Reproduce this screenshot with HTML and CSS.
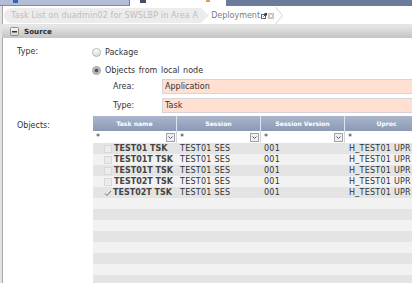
FILE: index.html
```html
<!DOCTYPE html>
<html>
<head>
<meta charset="utf-8">
<title>Deployment</title>
<link rel="stylesheet" href="styles.css">
</head>
<body>
<div class="tabs">
  <div class="tab-off"><span class="tab-icon-blue"></span></div>
  <div class="tab-on"><span class="tab-icon-dark"></span><span class="tab-icon-orange"></span></div>
  <div class="tab-fill"></div>
</div>
<div class="frame">
  <div class="crumbs">
    <div class="crumb-prev">Task List on duadmin02 for SWSLBP in Area A</div>
    <div class="crumb-cur">
      <span class="crumb-text">Deployment</span>
      <svg class="ico" width="6" height="6" viewBox="0 0 6 6"><rect x="0.5" y="1.5" width="4" height="4" fill="#fff" stroke="#666"/><path d="M2.5 3.5 L5.5 0.5 M3.5 0.5 H5.5 V2.5" stroke="#333" fill="none"/></svg>
      <svg class="ico" width="6" height="6" viewBox="0 0 6 6"><rect x="0" y="0" width="6" height="6" fill="#c4c4c4"/><path d="M1.5 1.5 L4.5 4.5 M4.5 1.5 L1.5 4.5" stroke="#fff"/></svg>
      <svg class="chev" width="8" height="17" viewBox="0 0 8 17"><polyline points="0.5,0 7.5,8.5 0.5,17" fill="none" stroke="#d2d2d2"/></svg>
    </div>
  </div>
  <div class="section-head">
    <svg class="toggle" width="9" height="9" viewBox="0 0 9 9"><defs><linearGradient id="tg" x1="0" y1="0" x2="0" y2="1"><stop offset="0" stop-color="#fafafa"/><stop offset="1" stop-color="#d4d4d4"/></linearGradient></defs><rect x="0.5" y="0.5" width="8" height="8" rx="1" fill="url(#tg)" stroke="#8c8c8c"/><rect x="2" y="4" width="5" height="1.5" fill="#333"/></svg>
    <span>Source</span>
  </div>
  <div class="form">
    <div class="lbl">Type:</div>
    <div class="radio-row">
      <svg width="9" height="9" viewBox="0 0 9 9"><defs><linearGradient id="rg" x1="0" y1="0" x2="0" y2="1"><stop offset="0" stop-color="#ffffff"/><stop offset="1" stop-color="#dcdcdc"/></linearGradient></defs><circle cx="4.5" cy="4.5" r="4" fill="url(#rg)" stroke="#b4b4b4"/></svg>
      <span>Package</span>
    </div>
    <div class="lbl"></div>
    <div class="radio-row">
      <svg width="9" height="9" viewBox="0 0 9 9"><circle cx="4.5" cy="4.5" r="4" fill="#c2c2c2" stroke="#a4a4a4"/><circle cx="4.5" cy="4.5" r="2" fill="#585858"/></svg>
      <span>Objects from local node</span>
    </div>
    <div class="lbl"></div>
    <div class="sub sub-area">
      <span class="sub-lbl">Area:</span>
      <div class="field">Application</div>
    </div>
    <div class="lbl"></div>
    <div class="sub sub-type">
      <span class="sub-lbl">Type:</span>
      <div class="field">Task</div>
    </div>
    <div class="lbl lbl-objects">Objects:</div>
    <div class="grid">
      <div class="g-head">
        <div class="h-cell">Task name</div>
        <div class="h-cell">Session</div>
        <div class="h-cell">Session Version</div>
        <div class="h-cell">Uproc</div>
      </div>
      <div class="g-filter">
        <div class="f-cell"><span>*</span><svg class="dd" width="9" height="9" viewBox="0 0 9 9"><rect x="0.5" y="0.5" width="8" height="8" fill="#eef0f4" stroke="#9ba2b0"/><polyline points="2.5,3.5 4.5,5.5 6.5,3.5" fill="none" stroke="#555"/></svg></div>
        <div class="f-cell"><span>*</span><svg class="dd" width="9" height="9" viewBox="0 0 9 9"><rect x="0.5" y="0.5" width="8" height="8" fill="#eef0f4" stroke="#9ba2b0"/><polyline points="2.5,3.5 4.5,5.5 6.5,3.5" fill="none" stroke="#555"/></svg></div>
        <div class="f-cell"><span>*</span><svg class="dd" width="9" height="9" viewBox="0 0 9 9"><rect x="0.5" y="0.5" width="8" height="8" fill="#eef0f4" stroke="#9ba2b0"/><polyline points="2.5,3.5 4.5,5.5 6.5,3.5" fill="none" stroke="#555"/></svg></div>
        <div class="f-cell"><span>*</span></div>
      </div>
      <div class="g-row">
        <div class="c-task"><span class="cb"></span><span class="tname">TEST01 TSK</span></div>
        <div class="c">TEST01 SES</div><div class="c">001</div><div class="c c4">H_TEST01 UPR</div>
      </div>
      <div class="g-row">
        <div class="c-task"><span class="cb"></span><span class="tname">TEST01T TSK</span></div>
        <div class="c">TEST01 SES</div><div class="c">001</div><div class="c c4">H_TEST01 UPR</div>
      </div>
      <div class="g-row">
        <div class="c-task"><span class="cb"></span><span class="tname">TEST01T TSK</span></div>
        <div class="c">TEST01 SES</div><div class="c">001</div><div class="c c4">H_TEST01 UPR</div>
      </div>
      <div class="g-row">
        <div class="c-task"><span class="cb"></span><span class="tname">TEST02T TSK</span></div>
        <div class="c">TEST01 SES</div><div class="c">001</div><div class="c c4">H_TEST01 UPR</div>
      </div>
      <div class="g-row">
        <div class="c-task"><svg class="cb-check" width="8" height="8" viewBox="0 0 8 8"><polyline points="1,4.5 3,6.5 7,2" fill="none" stroke="#6a6a6a" stroke-width="1"/></svg><span class="tname">TEST02T TSK</span></div>
        <div class="c">TEST01 SES</div><div class="c">001</div><div class="c c4">H_TEST01 UPR</div>
      </div>
      <div class="g-row"></div>
      <div class="g-row"></div>
      <div class="g-row"></div>
      <div class="g-row"></div>
      <div class="g-row"></div>
      <div class="g-row"></div>
      <div class="g-row"></div>
      <div class="g-row"></div>
    </div>
  </div>
</div>
</body>
</html>
```
FILE: styles.css
```css
html, body {
  margin: 0;
  padding: 0;
}
body {
  width: 412px;
  height: 283px;
  overflow: hidden;
  background: #fff;
  font-family: "DejaVu Sans", "Liberation Sans", sans-serif;
  font-size: 8px;
  color: #333;
}

/* top tab strip */
.tabs {
  display: flex;
  height: 6px;
}
.tab-off {
  width: 130px;
  box-sizing: border-box;
  background: #b3bdd6;
  border-right: 1px solid #6f7f9f;
  border-bottom: 1px solid #7d8bab;
  padding-left: 13px;
}
.tab-icon-blue {
  display: block;
  width: 5px;
  height: 3px;
  background: #3564b4;
}
.tab-on {
  width: 96px;
  background: #fff;
  display: flex;
  align-items: flex-start;
  padding-left: 10px;
  box-sizing: border-box;
  justify-content: space-between;
  padding-right: 16px;
}
.tab-icon-dark {
  display: block;
  width: 6px;
  height: 3px;
  background: #40506c;
}
.tab-icon-orange {
  display: block;
  width: 4px;
  height: 2px;
  background: #e0a050;
}
.tab-fill {
  flex: 1;
  background: #6b7b9b;
}

/* frame with left border */
.frame {
  border-left: 2px solid #e2e2e2;
  box-shadow: inset 1px 0 0 #a8a8a8;
  height: 277px;
}

/* breadcrumbs */
.crumbs {
  display: flex;
  align-items: center;
  height: 17px;
  padding-top: 1px;
  border-bottom: 1px solid #e4e4e4;
  padding-left: 2px;
}
.crumb-prev {
  height: 15px;
  line-height: 15px;
  background: #ececec;
  color: #bdbdbd;
  border-radius: 8px 0 0 8px;
  padding: 0 11px 0 7px;
  letter-spacing: 0.12px;
  clip-path: polygon(0 0, calc(100% - 8px) 0, 100% 50%, calc(100% - 8px) 100%, 0 100%);
  white-space: nowrap;
}
.crumb-cur {
  display: flex;
  align-items: center;
  height: 17px;
  margin-left: 2px;
  color: #7a7a7a;
}
.crumb-text {
  margin-right: 1px;
}
.ico {
  margin-right: 1px;
}
.chev {
  margin-left: 0;
}

/* section header */
.section-head {
  display: flex;
  align-items: center;
  height: 13px;
  background: linear-gradient(#e8e8e8, #c4c4c4);
  padding-left: 8px;
  font-weight: bold;
  font-size: 7.2px;
  color: #2e2e2e;
}
.toggle {
  margin-right: 5px;
}

/* form */
.form {
  display: grid;
  grid-template-columns: 75px 1fr;
  padding: 5px 0 0 15px;
  word-spacing: 1px;
}
.lbl {
  height: 18px;
  line-height: 18px;
  color: #333;
}
.radio-row {
  display: flex;
  align-items: center;
  height: 18px;
  gap: 4px;
}
.sub {
  display: grid;
  grid-template-columns: 49px 1fr;
  align-items: center;
  padding-left: 21px;
  margin-right: -10px;
}
.sub-area {
  margin-bottom: 4px;
}
.sub-type {
  margin-bottom: 3px;
}
.sub-lbl {
  color: #333;
}
.field {
  height: 15px;
  line-height: 13px;
  box-sizing: border-box;
  background: #ffe0d1;
  border: 1px solid #d6d2de;
  padding-left: 2px;
  color: #333;
}
.lbl-objects {
  height: auto;
  line-height: 10px;
  padding-top: 5px;
}

/* data grid */
.grid {
  margin-left: 1px;
  width: 340px;
  word-spacing: 0;
}
.g-head {
  display: grid;
  grid-template-columns: repeat(4, 83px);
  column-gap: 1px;
  background: #dfe4ee;
  height: 15px;
}
.h-cell {
  background: linear-gradient(#abb6cc, #8b99b5);
  color: #fff;
  font-weight: bold;
  font-size: 6.1px;
  text-align: center;
  line-height: 15px;
  white-space: nowrap;
}
.g-filter {
  display: grid;
  grid-template-columns: repeat(4, 83px);
  column-gap: 1px;
  background: #d4d4d4;
  height: 12px;
}
.f-cell {
  background: #fff;
  display: flex;
  align-items: center;
  justify-content: space-between;
  padding: 0 1px 0 3px;
  color: #333;
}
.dd {
  display: block;
}
.g-row {
  display: grid;
  grid-template-columns: repeat(4, 83px);
  column-gap: 1px;
  height: 11px;
  line-height: 11px;
  white-space: nowrap;
  letter-spacing: 0.25px;
}
.g-row:nth-child(even) {
  background: #f2f2f2;
}
.g-row:nth-child(odd) {
  background: #e4e4e4;
}
.c-task {
  display: flex;
  align-items: center;
  padding-left: 11px;
}
.cb {
  display: block;
  background: #ececec;
  border: 1px solid #d8d8d8;
  margin-right: 2px;
  width: 6px;
  height: 6px;
}
.cb-check {
  display: block;
  margin-right: 1px;
}
.tname {
  font-weight: bold;
  letter-spacing: 0;
  color: #444;
}
.c {
  padding-left: 3px;
  color: #333;
}
.c4 {
  padding-left: 4px;
}
```
